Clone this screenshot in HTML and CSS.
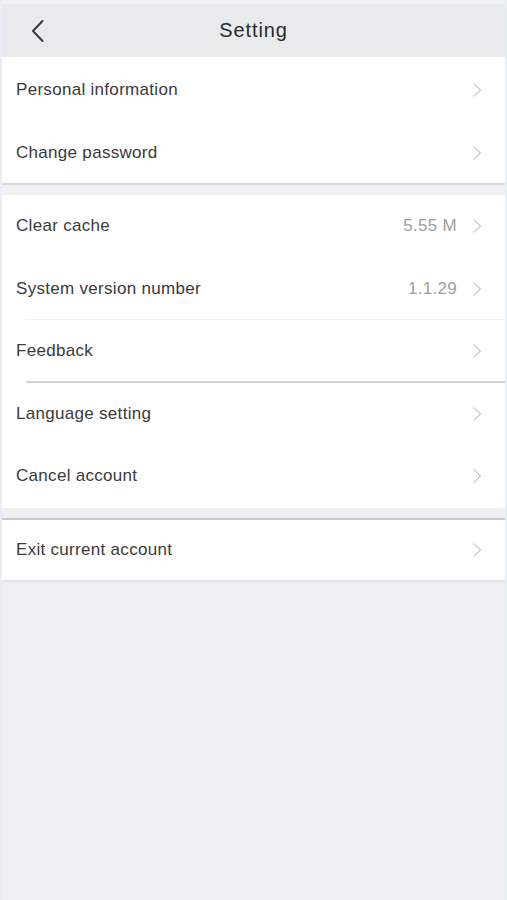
FILE: index.html
```html
<!DOCTYPE html>
<html>
<head>
<meta charset="utf-8">
<link rel="stylesheet" href="styles.css">
</head>
<body>
<div class="page">
  <header class="nav">
    <span class="back">
      <svg width="14" height="24" viewBox="0 0 14 24"><path d="M11.5 2 L2 12 L11.5 22" fill="none" stroke="#3a3a3a" stroke-width="2" stroke-linecap="round" stroke-linejoin="round"/></svg>
    </span>
    <h1 class="title">Setting</h1>
  </header>

  <section class="card card-first">
    <div class="row"><span class="label">Personal information</span><span class="chev"></span></div>
    <div class="row"><span class="label">Change password</span><span class="chev"></span></div>
  </section>

  <section class="card card-mid">
    <div class="row"><span class="label">Clear cache</span><span class="value">5.55 M</span><span class="chev"></span></div>
    <div class="row row-line-light"><span class="label">System version number</span><span class="value">1.1.29</span><span class="chev"></span></div>
    <div class="row row-line-dark"><span class="label">Feedback</span><span class="chev"></span></div>
    <div class="row"><span class="label">Language setting</span><span class="chev"></span></div>
    <div class="row"><span class="label">Cancel account</span><span class="chev"></span></div>
  </section>

  <section class="card card-last">
    <div class="row"><span class="label">Exit current account</span><span class="chev"></span></div>
  </section>
</div>
</body>
</html>
```

FILE: styles.css
```css
* { box-sizing: border-box; }
html, body {
  margin: 0;
  padding: 0;
  background: #eff0f3;
}
body {
  font-family: "Liberation Sans", Arial, sans-serif;
  color: #333;
}
.page {
  width: 507px;
  min-height: 900px;
  background: #eff0f3;
  border-left: 2px solid #e8eef8;
  border-right: 2px solid #e8eef8;
}
.nav {
  height: 57px;
  background: #e9eaec;
  border-top: 4px solid #eef1f6;
  display: flex;
  align-items: center;
  justify-content: center;
  position: relative;
}
.back {
  position: absolute;
  left: 29px;
  top: 15px;
  display: flex;
}
.title {
  margin: 0;
  font-size: 20px;
  font-weight: normal;
  color: #2a2a2a;
  letter-spacing: 0.9px;
}
.card {
  background: #fff;
}
.card-first {
  border-bottom: 2px solid #d9d9dc;
}
.card-first .row { padding-top: 3px; }
.card-mid {
  margin-top: 10px;
}
.card-last {
  margin-top: 10px;
  border-top: 2px solid #c9c9cc;
  border-bottom: 2px solid #e3e3e6;
}
.row {
  height: 63px;
  display: flex;
  align-items: center;
  padding: 0 24px 0 14px;
  position: relative;
  font-size: 17px;
  letter-spacing: 0.3px;
}
.card-mid .row { height: 62.5px; }
.card-last .row { height: 60px; }
.label {
  flex: 1;
  color: #3a3a3a;
}
.value {
  color: #a0a0a0;
  margin-right: 12px;
}
.chev {
  width: 10px;
  height: 10px;
  border-top: 1.6px solid #c2c2c2;
  border-right: 1.6px solid #c2c2c2;
  transform: rotate(45deg);
  margin-right: 2px;
}
.row-line-light::after,
.row-line-dark::after {
  content: "";
  position: absolute;
  left: 24px;
  right: 0;
  bottom: 0;
  height: 1px;
}
.row-line-light::after { background: #f0f0f2; }
.row-line-dark::after { background: #d2d2d5; height: 2px; }
```
